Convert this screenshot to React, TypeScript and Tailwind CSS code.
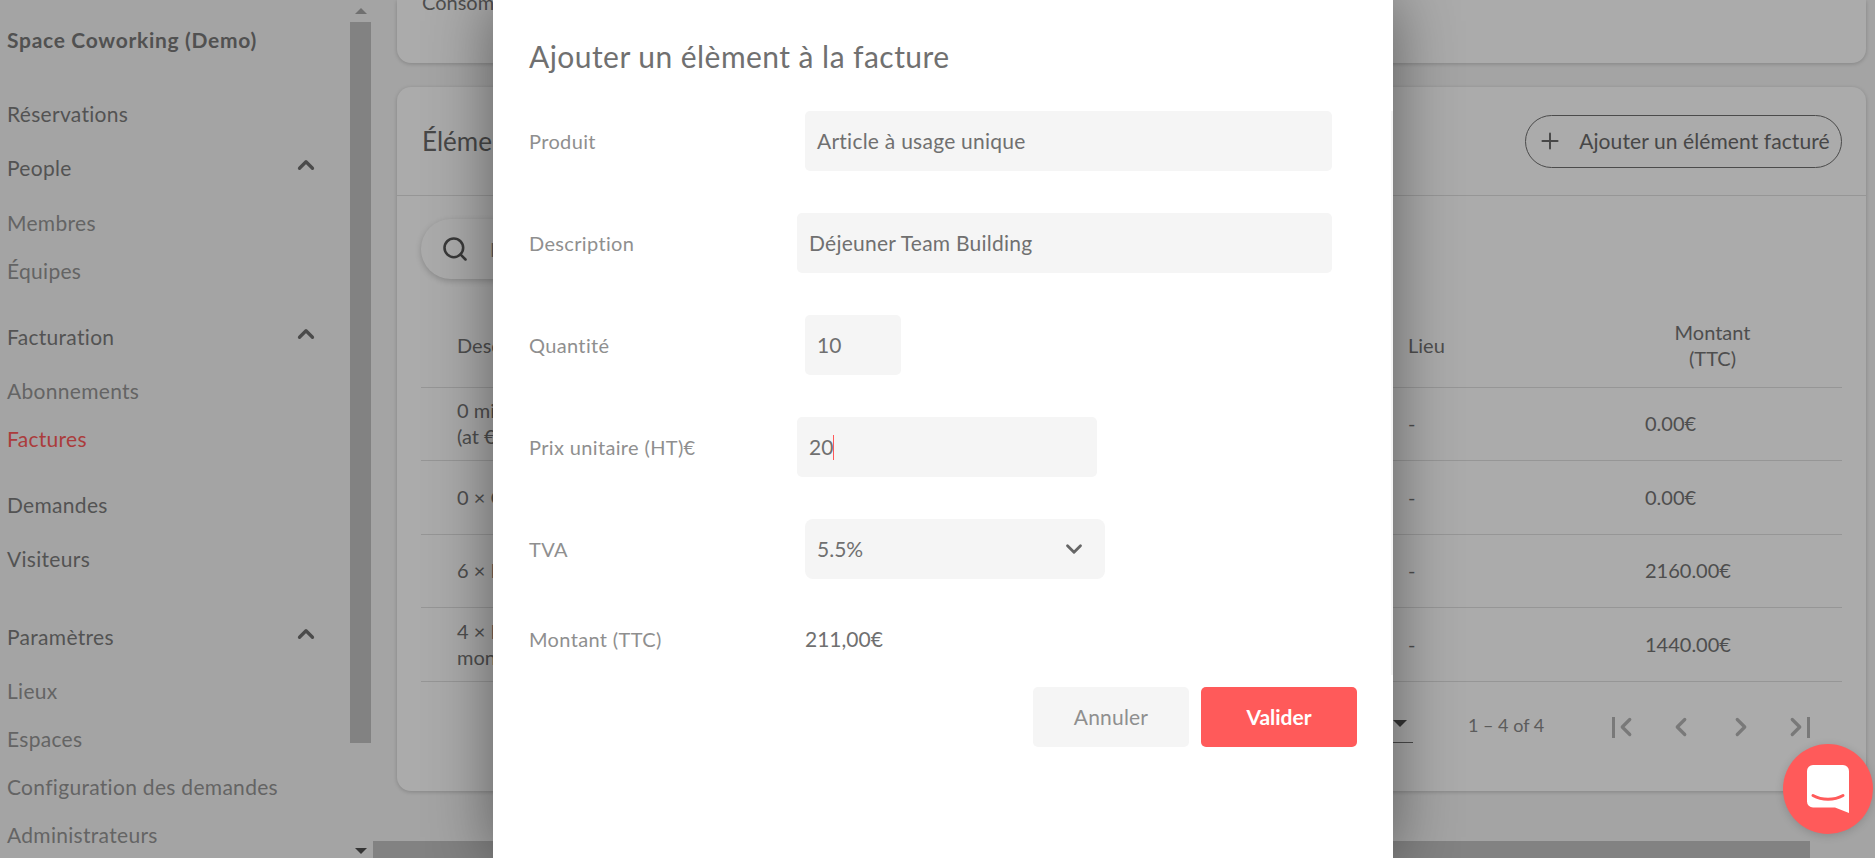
import React from 'react'
import { ChevronUp, ChevronDown, ChevronLeft, ChevronRight, Plus, Search } from 'lucide-react'

const NAV = [
  { label: 'Réservations', kind: 'group', h: 'h-[54px]' },
  { label: 'People', kind: 'group', chevron: true, h: 'h-[54px]', after: 'mb-[1px]' },
  { label: 'Membres', kind: 'item', h: 'h-[48px]' },
  { label: 'Équipes', kind: 'item', h: 'h-[48px]', after: 'mb-[18px]' },
  { label: 'Facturation', kind: 'group', chevron: true, h: 'h-[54px]' },
  { label: 'Abonnements', kind: 'item', h: 'h-[48px]' },
  { label: 'Factures', kind: 'active', h: 'h-[48px]', after: 'mb-[18px]' },
  { label: 'Demandes', kind: 'group', h: 'h-[54px]' },
  { label: 'Visiteurs', kind: 'group', h: 'h-[54px]', after: 'mb-[24px]' },
  { label: 'Paramètres', kind: 'group', chevron: true, h: 'h-[54px]' },
  { label: 'Lieux', kind: 'item', h: 'h-[48px]' },
  { label: 'Espaces', kind: 'item', h: 'h-[48px]' },
  { label: 'Configuration des demandes', kind: 'item', h: 'h-[48px]' },
  { label: 'Administrateurs', kind: 'item', h: 'h-[48px]' },
]

const ROWS = [
  { desc: ['0 minutes de salle', '(at €0.00 par heure)'], total: '0.00€', h: 'h-[73px]' },
  { desc: ['0 × Café'], total: '0.00€', h: 'h-[74px]' },
  { desc: ['6 × Bureau fixe'], total: '2160.00€', h: 'h-[73px]' },
  { desc: ['4 × Bureau nomade', 'monthly'], total: '1440.00€', h: 'h-[74px]' },
]

function Sidebar() {
  return (
    <aside className="w-[350px] shrink-0 h-full pl-[7px] pt-[26px] overflow-hidden">
      <div className="text-[21px] leading-[28px] font-bold tracking-[0.7px] text-[#7a7a7a] mb-[33px]">Space Coworking (Demo)</div>
      {NAV.map(({ label, kind, chevron, h, after }) => (
        <div key={label} className={`flex items-center justify-between pr-[31px] ${h} ${after ?? ''} ${kind === 'group' ? '' : 'pt-[6px]'}`}>
          <span
            className={
              kind === 'group'
                ? 'text-[21px] tracking-[0.3px] text-[#7d7d7d]'
                : kind === 'active'
                  ? 'text-[21px] tracking-[0.3px] text-[#ff5a5a]'
                  : 'text-[21px] tracking-[0.3px] text-[#959595]'
            }
          >
            {label}
          </span>
          {chevron && <ChevronUp size={26} strokeWidth={3} className="text-[#707070] -mt-[6px]" />}
        </div>
      ))}
    </aside>
  )
}

function VerticalScrollbar() {
  return (
    <div className="w-[21px] shrink-0 h-full flex flex-col items-center">
      <div className="h-[22px] flex items-center justify-center">
        <div className="w-0 h-0 border-x-[6px] border-x-transparent border-b-[6px] border-b-[#a8a8a8]" />
      </div>
      <div className="w-full h-[721px] bg-[#c2c2c2]" />
      <div className="flex-1 flex items-end justify-center pb-[4px]">
        <div className="w-0 h-0 border-x-[6px] border-x-transparent border-t-[6px] border-t-[#505050]" />
      </div>
    </div>
  )
}

function Pagination() {
  return (
    <div className="h-[109px] flex items-start justify-end pr-[26px] pt-[23px] text-[#8a8a8a]">
      <div className="w-[24px] h-[38px] border-b-[1px] border-[#707070] flex items-center justify-end pr-[6px]">
        <div className="w-0 h-0 border-x-[7px] border-x-transparent border-t-[7px] border-t-[#505050]" />
      </div>
      <span className="text-[18px] leading-[38px] mt-[1px] ml-[55px] w-[138px]">1 – 4 of 4</span>
      <div className="flex items-center gap-[30px] h-[38px] mt-[3px] text-[#b5b5b5]">
        <div className="flex items-center w-[30px] justify-center ml-[5px] -mr-[5px]">
          <div className="w-[3px] h-[21px] bg-[#b5b5b5] mr-[-4px]" />
          <ChevronLeft size={30} strokeWidth={2.6} />
        </div>
        <ChevronLeft size={30} strokeWidth={2.6} />
        <ChevronRight size={30} strokeWidth={2.6} />
        <div className="flex items-center w-[30px] justify-center -ml-[6px] mr-[6px]">
          <ChevronRight size={30} strokeWidth={2.6} />
          <div className="w-[3px] h-[21px] bg-[#b5b5b5] ml-[-4px]" />
        </div>
      </div>
    </div>
  )
}

function Main() {
  return (
    <main className="flex-1 min-w-0 h-full pl-[26px] pr-[9px] overflow-hidden">
      <div className="h-[63px] bg-white rounded-b-[14px] shadow-[0_1px_4px_rgba(0,0,0,0.2)] pl-[25px] text-[20px] leading-[4px] text-[#757575] overflow-hidden">
        Consommation
      </div>
      <section className="mt-[24px] h-[704px] bg-white rounded-[14px] shadow-[0_1px_4px_rgba(0,0,0,0.2)] flex flex-col">
        <header className="h-[109px] shrink-0 border-b border-[#e0e0e0] flex items-center justify-between pl-[25px] pr-[24px]">
          <h2 className="text-[26px] text-[#6b6b6b]">Éléments facturés</h2>
          <button className="w-[317px] h-[53px] rounded-full border border-[#707070] flex items-center justify-center gap-[16px] text-[21px] tracking-[0.1px] text-[#6b6b6b]">
            <Plus size={26} strokeWidth={1.8} />
            Ajouter un élément facturé
          </button>
        </header>
        <div className="px-[24px] flex-1 flex flex-col">
          <div className="mt-[23px] h-[60px] w-[420px] rounded-full shadow-[0_2px_6px_rgba(0,0,0,0.2)] flex items-center gap-[21px] pl-[20px] text-[#8a8a8a] text-[20px]">
            <Search size={28} strokeWidth={2.2} className="text-[#555555]" />
            Rechercher
          </div>
          <div className="mt-[29px] h-[80px] pb-[6px] flex items-center border-b border-[#e0e0e0] text-[20px] text-[#757575] shrink-0">
            <span className="w-[987px] pl-[36px]">Description</span>
            <span className="w-[242px]">Lieu</span>
            <span className="w-[125px] text-center leading-[26px]">
              Montant
              <br />
              (TTC)
            </span>
          </div>
          {ROWS.map(({ desc, total, h }) => (
            <div key={total + desc[0]} className={`flex items-center pb-[2px] border-b border-[#e0e0e0] text-[20px] leading-[26px] text-[#757575] shrink-0 ${h}`}>
              <span className="w-[987px] pl-[36px]">
                {desc.map(line => (
                  <div key={line}>{line}</div>
                ))}
              </span>
              <span className="w-[237px]">-</span>
              <span>{total}</span>
            </div>
          ))}
          <Pagination />
        </div>
      </section>
      <div className="mt-[50px] h-[17px] w-[1437px] -ml-[24px] bg-[#c2c2c2]" />
    </main>
  )
}

function Field({ label, children, labelWidth }: { label: string; children: React.ReactNode; labelWidth: string }) {
  return (
    <div className="flex items-center h-[60px]">
      <label className={`${labelWidth} shrink-0 text-[20px] tracking-[0.35px] text-[#8f8f8f]`}>{label}</label>
      {children}
    </div>
  )
}

function Modal() {
  return (
    <div className="absolute left-[493px] top-0 w-[900px] h-full bg-white shadow-[0_0_60px_rgba(0,0,0,0.45)] px-[36px] pt-[36px]">
      <h1 className="text-[30px] leading-[40px] tracking-[0.45px] text-[#707070] mb-[35px]">Ajouter un élèment à la facture</h1>
      <div className="flex flex-col gap-[42px] pr-[25px]">
        <Field label="Produit" labelWidth="w-[276px]">
          <div className="flex-1 h-full rounded-[5px] bg-[#f5f5f5] flex items-center px-[12px] text-[21px] tracking-[0.25px] text-[#707070]">Article à usage unique</div>
        </Field>
        <Field label="Description" labelWidth="w-[268px]">
          <div className="flex-1 h-full rounded-[5px] bg-[#f5f5f5] flex items-center px-[12px] text-[21px] tracking-[0.25px] text-[#707070]">Déjeuner Team Building</div>
        </Field>
        <Field label="Quantité" labelWidth="w-[276px]">
          <div className="w-[96px] h-full rounded-[5px] bg-[#f5f5f5] flex items-center px-[12px] text-[21px] text-[#707070]">10</div>
        </Field>
        <Field label="Prix unitaire (HT)€" labelWidth="w-[268px]">
          <div className="w-[300px] h-full rounded-[5px] bg-[#f5f5f5] flex items-center px-[12px] text-[21px] text-[#707070]">
            20
            <span className="w-px h-[25px] bg-[#ff5a5a]" />
          </div>
        </Field>
        <Field label="TVA" labelWidth="w-[276px]">
          <div className="w-[300px] h-full rounded-[8px] bg-[#f5f5f5] flex items-center justify-between pl-[12px] pr-[18px] text-[21px] text-[#707070]">
            5.5%
            <ChevronDown size={26} strokeWidth={2.6} className="text-[#666666]" />
          </div>
        </Field>
      </div>
      <div className="mt-[30px]">
        <Field label="Montant (TTC)" labelWidth="w-[276px]">
          <span className="text-[21px] text-[#707070]">211,00€</span>
        </Field>
      </div>
      <div className="mt-[18px] flex justify-end gap-[12px]">
        <button className="w-[156px] h-[60px] rounded-[5px] bg-[#f5f5f5] text-[21px] tracking-[0.2px] text-[#8f8f8f]">Annuler</button>
        <button className="w-[156px] h-[60px] rounded-[5px] bg-[#ff5a5a] text-[21px] font-bold text-white">Valider</button>
      </div>
      <div className="absolute right-0 top-[111px] w-[2px] h-[564px] bg-[#f5f5f5]" />
    </div>
  )
}

function ChatBubble() {
  return (
    <div className="absolute left-[1783px] top-[744px] w-[90px] h-[90px] rounded-full bg-[#ff5a5a] flex items-center justify-center shadow-[0_2px_8px_rgba(0,0,0,0.15)]">
      <svg width="42" height="48" viewBox="0 0 42 48">
        <path d="M6 0h30a6 6 0 0 1 6 6v42l-14-5.500H6a6 6 0 0 1-6-6V6a6 6 0 0 1 6-6z" fill="#fff" />
        <path d="M6 30.500c9 5 21 5 30 0" fill="none" stroke="#ff5a5a" strokeWidth="3" strokeLinecap="round" />
      </svg>
    </div>
  )
}

export default function App() {
  return (
    <div className="relative w-full h-screen overflow-hidden bg-[#f5f5f5] font-['Lato',sans-serif]">
      <div className="flex h-full">
        <Sidebar />
        <VerticalScrollbar />
        <Main />
      </div>
      <div className="absolute inset-0 bg-black/33" />
      <Modal />
      <ChatBubble />
    </div>
  )
}
